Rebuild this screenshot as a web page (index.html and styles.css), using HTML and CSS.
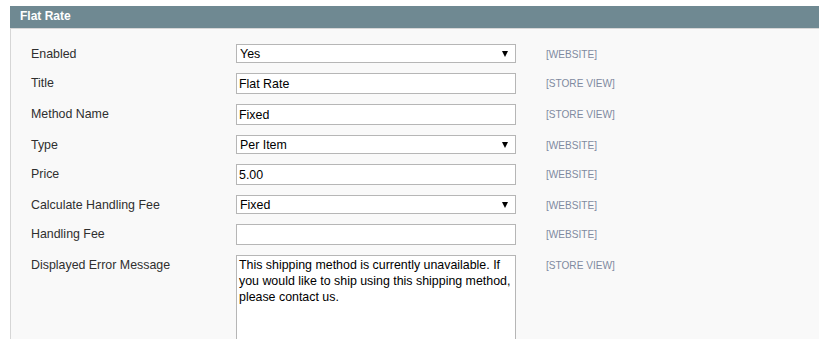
FILE: index.html
```html
<!DOCTYPE html>
<html>
<head>
<meta charset="utf-8">
<link rel="stylesheet" href="styles.css">
</head>
<body>
<div class="section">
  <div class="section-head">Flat Rate</div>
  <div class="section-body">
    <div class="row">
      <label class="label">Enabled</label>
      <div class="field"><div class="select-wrap"><select class="select"><option>Yes</option></select></div></div>
      <span class="scope">[WEBSITE]</span>
    </div>
    <div class="row">
      <label class="label">Title</label>
      <div class="field"><input class="input" type="text" value="Flat Rate"></div>
      <span class="scope">[STORE VIEW]</span>
    </div>
    <div class="row">
      <label class="label">Method Name</label>
      <div class="field"><input class="input" type="text" value="Fixed"></div>
      <span class="scope">[STORE VIEW]</span>
    </div>
    <div class="row">
      <label class="label">Type</label>
      <div class="field"><div class="select-wrap"><select class="select"><option>Per Item</option></select></div></div>
      <span class="scope">[WEBSITE]</span>
    </div>
    <div class="row">
      <label class="label">Price</label>
      <div class="field"><input class="input" type="text" value="5.00"></div>
      <span class="scope">[WEBSITE]</span>
    </div>
    <div class="row">
      <label class="label">Calculate Handling Fee</label>
      <div class="field"><div class="select-wrap"><select class="select"><option>Fixed</option></select></div></div>
      <span class="scope">[WEBSITE]</span>
    </div>
    <div class="row">
      <label class="label">Handling Fee</label>
      <div class="field"><input class="input" type="text" value=""></div>
      <span class="scope">[WEBSITE]</span>
    </div>
    <div class="row">
      <label class="label">Displayed Error Message</label>
      <div class="field"><textarea class="textarea">This shipping method is currently unavailable. If you would like to ship using this shipping method, please contact us.</textarea></div>
      <span class="scope">[STORE VIEW]</span>
    </div>
  </div>
</div>
</body>
</html>
```

FILE: styles.css
```css
html, body {
  margin: 0;
  padding: 0;
  background: #ffffff;
  font-family: "Liberation Sans", Arial, sans-serif;
  font-size: 12px;
  overflow: hidden;
}

.section {
  margin: 6px 0 0 10px;
}

.section-head {
  height: 22px;
  line-height: 21px;
  background: #6f8992;
  color: #ffffff;
  font-weight: bold;
  font-size: 12px;
  padding-left: 10px;
  border-bottom: 1px solid #d6d6d6;
}

.section-body {
  background: #f9f9f9;
  border-left: 1px solid #d6d6d6;
  padding-top: 15px;
  height: 400px;
}

.row {
  display: flex;
  align-items: flex-start;
  margin-bottom: 10px;
}

.label {
  width: 205px;
  padding-left: 20px;
  color: #2f2f2f;
  font-size: 12.4px;
  line-height: 15px;
  padding-top: 3px;
}

.field {
  width: 280px;
}

.scope {
  margin-left: 30px;
  color: #7f8aa0;
  font-size: 10.1px;
  line-height: 15px;
  padding-top: 3px;
}

.select-wrap {
  position: relative;
}

.select-wrap::after {
  content: "";
  position: absolute;
  right: 8px;
  top: 7px;
  border-left: 3.5px solid transparent;
  border-right: 3.5px solid transparent;
  border-top: 6px solid #000000;
  pointer-events: none;
}

.select {
  -webkit-appearance: none;
  appearance: none;
  display: block;
  width: 280px;
  height: 19px;
  margin: 0;
  padding: 1px 0 0 3px;
  border: 1px solid #b6b6b6;
  border-radius: 0;
  background: #ffffff;
  color: #000000;
  font-family: "Liberation Sans", Arial, sans-serif;
  font-size: 12.4px;
  line-height: 16px;
}

.input {
  display: block;
  box-sizing: border-box;
  width: 280px;
  height: 21px;
  margin: 0;
  padding: 0 2px;
  border: 1px solid #b6b6b6;
  border-radius: 0;
  background: #ffffff;
  color: #000000;
  font-family: "Liberation Sans", Arial, sans-serif;
  font-size: 12.4px;
  outline: none;
}

.textarea {
  display: block;
  box-sizing: border-box;
  width: 280px;
  height: 120px;
  margin: 0;
  padding: 1px 2px;
  border: 1px solid #b6b6b6;
  border-radius: 0;
  background: #ffffff;
  color: #000000;
  font-family: "Liberation Sans", Arial, sans-serif;
  font-size: 12.4px;
  line-height: 16px;
  resize: none;
  overflow: hidden;
}
```
